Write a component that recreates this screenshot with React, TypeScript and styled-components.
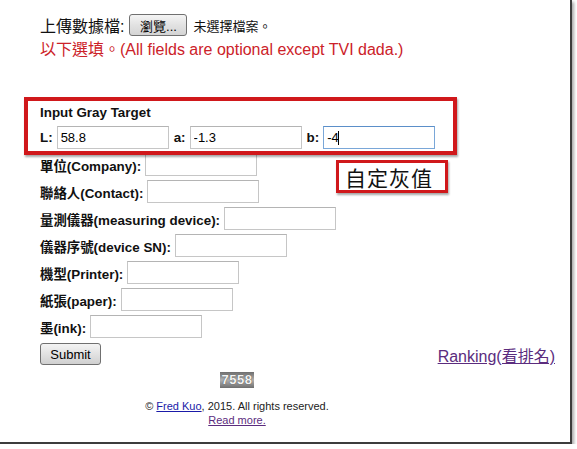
import React from 'react';
import styled, { createGlobalStyle } from 'styled-components';

const GlobalStyle = createGlobalStyle`
  html, body {
    margin: 0;
    padding: 0;
    background: #ffffff;
  }
  body {
    font-family: "Liberation Sans", Arial, "Noto Sans CJK TC", sans-serif;
    color: #000;
  }
`;

const Frame = styled.div`
  position: relative;
  width: 572px;
  height: 444px;
  box-sizing: border-box;
  background: #fff;
  border-right: 2px solid #3c3c3c;
  border-bottom: 2px solid #3c3c3c;
  box-shadow: 2px 2px 3px rgba(0, 0, 0, 0.35);
  padding: 14px 15px 0 40px;
  overflow: hidden;
`;

const UploadRow = styled.div`
  display: flex;
  align-items: center;
  height: 22px;
  font-size: 16px;
  color: #111;
`;

const BrowseButton = styled.button`
  height: 22px;
  width: 58px;
  margin-left: 5px;
  padding: 0;
  font-family: "Liberation Sans", "Noto Sans CJK TC", sans-serif;
  font-size: 13px;
  color: #000;
  border: 1px solid #707070;
  border-radius: 3px;
  background: linear-gradient(#f4f4f4, #e2e2e2 50%, #d4d4d4);
`;

const NoFile = styled.span`
  margin-left: 6px;
  font-size: 13px;
`;

const Notice = styled.div`
  margin-top: 3px;
  height: 22px;
  line-height: 22px;
  font-size: 16px;
  color: #cc2229;
`;

const SectionTitle = styled.div`
  margin-top: 44px;
  height: 16px;
  line-height: 16px;
  font-size: 13.4px;
  font-weight: bold;
  color: #111;
`;

const LabRow = styled.div`
  margin-top: 5px;
  display: flex;
  align-items: center;
  height: 23px;
`;

const Label = styled.label<{ gap?: number }>`
  font-size: 13.4px;
  font-weight: bold;
  color: #111;
  margin-left: ${({ gap }) => gap ?? 0}px;
  margin-right: 4px;
  white-space: nowrap;
`;

const TextBox = styled.input<{ focused?: boolean }>`
  box-sizing: border-box;
  width: 112px;
  height: 23px;
  padding: 0 3px;
  font-family: "Liberation Sans", Arial, sans-serif;
  font-size: 13px;
  color: #000;
  background: #fff;
  border: 1px solid ${({ focused }) => (focused ? '#7aa7d8' : '#c6c6c6')};
  border-top-color: ${({ focused }) => (focused ? '#5b8fc9' : '#b4b4b4')};
  outline: none;
`;

const CaretWrap = styled.span`
  position: relative;
  display: inline-flex;
`;

const Caret = styled.span`
  position: absolute;
  left: 15px;
  top: 5px;
  width: 1px;
  height: 14px;
  background: #000;
`;

const Fields = styled.div`
  margin-top: 4px;
  display: flex;
  flex-direction: column;
  gap: 4px;
`;

const FieldRow = styled.div`
  display: flex;
  align-items: center;
  height: 23px;
`;

const ActionRow = styled.div`
  margin-top: 5px;
  display: flex;
  align-items: center;
  justify-content: space-between;
  height: 22px;
`;

const SubmitButton = styled.button`
  width: 61px;
  height: 22px;
  padding: 0;
  font-family: "Liberation Sans", Arial, sans-serif;
  font-size: 13px;
  color: #000;
  border: 1px solid #707070;
  border-radius: 3px;
  background: linear-gradient(#f4f4f4, #e2e2e2 50%, #d0d0d0);
`;

const RankingLink = styled.a`
  font-size: 16px;
  color: #5b2c7e;
  text-decoration: underline;
  margin-top: 2px;
`;

const Footer = styled.div`
  width: 394px;
  text-align: center;
  font-size: 11px;
  color: #222;
`;

const Counter = styled.div`
  display: inline-block;
  margin-top: 7px;
  width: 34px;
  height: 16px;
  line-height: 16px;
  font-size: 13px;
  font-weight: bold;
  letter-spacing: 0.5px;
  color: #f4f4f4;
  text-shadow: 0 0 1px #333;
  background: linear-gradient(#6e6e6e, #b0b0b0 50%, #6e6e6e);
`;

const CopyLine = styled.div<{ top: number }>`
  margin-top: ${({ top }) => top}px;
  line-height: 14px;
`;

const FootLink = styled.a<{ visited?: boolean }>`
  color: ${({ visited }) => (visited ? '#5b2c7e' : '#1a1aa8')};
  text-decoration: underline;
`;

const HighlightBox = styled.div`
  position: absolute;
  left: 24px;
  top: 97px;
  width: 433px;
  height: 58px;
  box-sizing: border-box;
  border: 4px solid #d0181b;
  box-shadow: 1px 2px 2px rgba(0, 0, 0, 0.35);
  pointer-events: none;
`;

const Callout = styled.div`
  position: absolute;
  left: 336px;
  top: 160px;
  width: 112px;
  height: 33px;
  box-sizing: border-box;
  border: 3px solid #d0181b;
  box-shadow: 1px 2px 2px rgba(0, 0, 0, 0.35);
  background: #fff;
  display: flex;
  align-items: center;
  padding-left: 6px;
  font-family: "Noto Sans CJK TC", sans-serif;
  font-size: 21px;
  letter-spacing: 1px;
  color: #111;
`;

const fields = [
  '單位(Company):',
  '聯絡人(Contact):',
  '量測儀器(measuring device):',
  '儀器序號(device SN):',
  '機型(Printer):',
  '紙張(paper):',
  '墨(ink):',
];

const App: React.FC = () => {
  return (
    <>
      <GlobalStyle />
      <Frame>
        <UploadRow>
          上傳數據檔:
          <BrowseButton>瀏覽...</BrowseButton>
          <NoFile>未選擇檔案。</NoFile>
        </UploadRow>
        <Notice>以下選填。(All fields are optional except TVI dada.)</Notice>

        <SectionTitle>Input Gray Target</SectionTitle>
        <LabRow>
          <Label>L:</Label>
          <TextBox defaultValue="58.8" />
          <Label gap={5}>a:</Label>
          <TextBox defaultValue="-1.3" />
          <Label gap={5}>b:</Label>
          <CaretWrap>
            <TextBox focused defaultValue="-4" />
            <Caret />
          </CaretWrap>
        </LabRow>

        <Fields>
          {fields.map((f) => (
            <FieldRow key={f}>
              <Label>{f}</Label>
              <TextBox />
            </FieldRow>
          ))}
        </Fields>

        <ActionRow>
          <SubmitButton>Submit</SubmitButton>
          <RankingLink href="#">Ranking(看排名)</RankingLink>
        </ActionRow>

        <Footer>
          <Counter>7558</Counter>
          <CopyLine top={11}>
            © <FootLink href="#">Fred Kuo</FootLink>, 2015. All rights reserved.
          </CopyLine>
          <CopyLine top={0}>
            <FootLink visited href="#">Read more.</FootLink>
          </CopyLine>
        </Footer>

        <HighlightBox />
        <Callout>自定灰值</Callout>
      </Frame>
    </>
  );
};

export default App;
